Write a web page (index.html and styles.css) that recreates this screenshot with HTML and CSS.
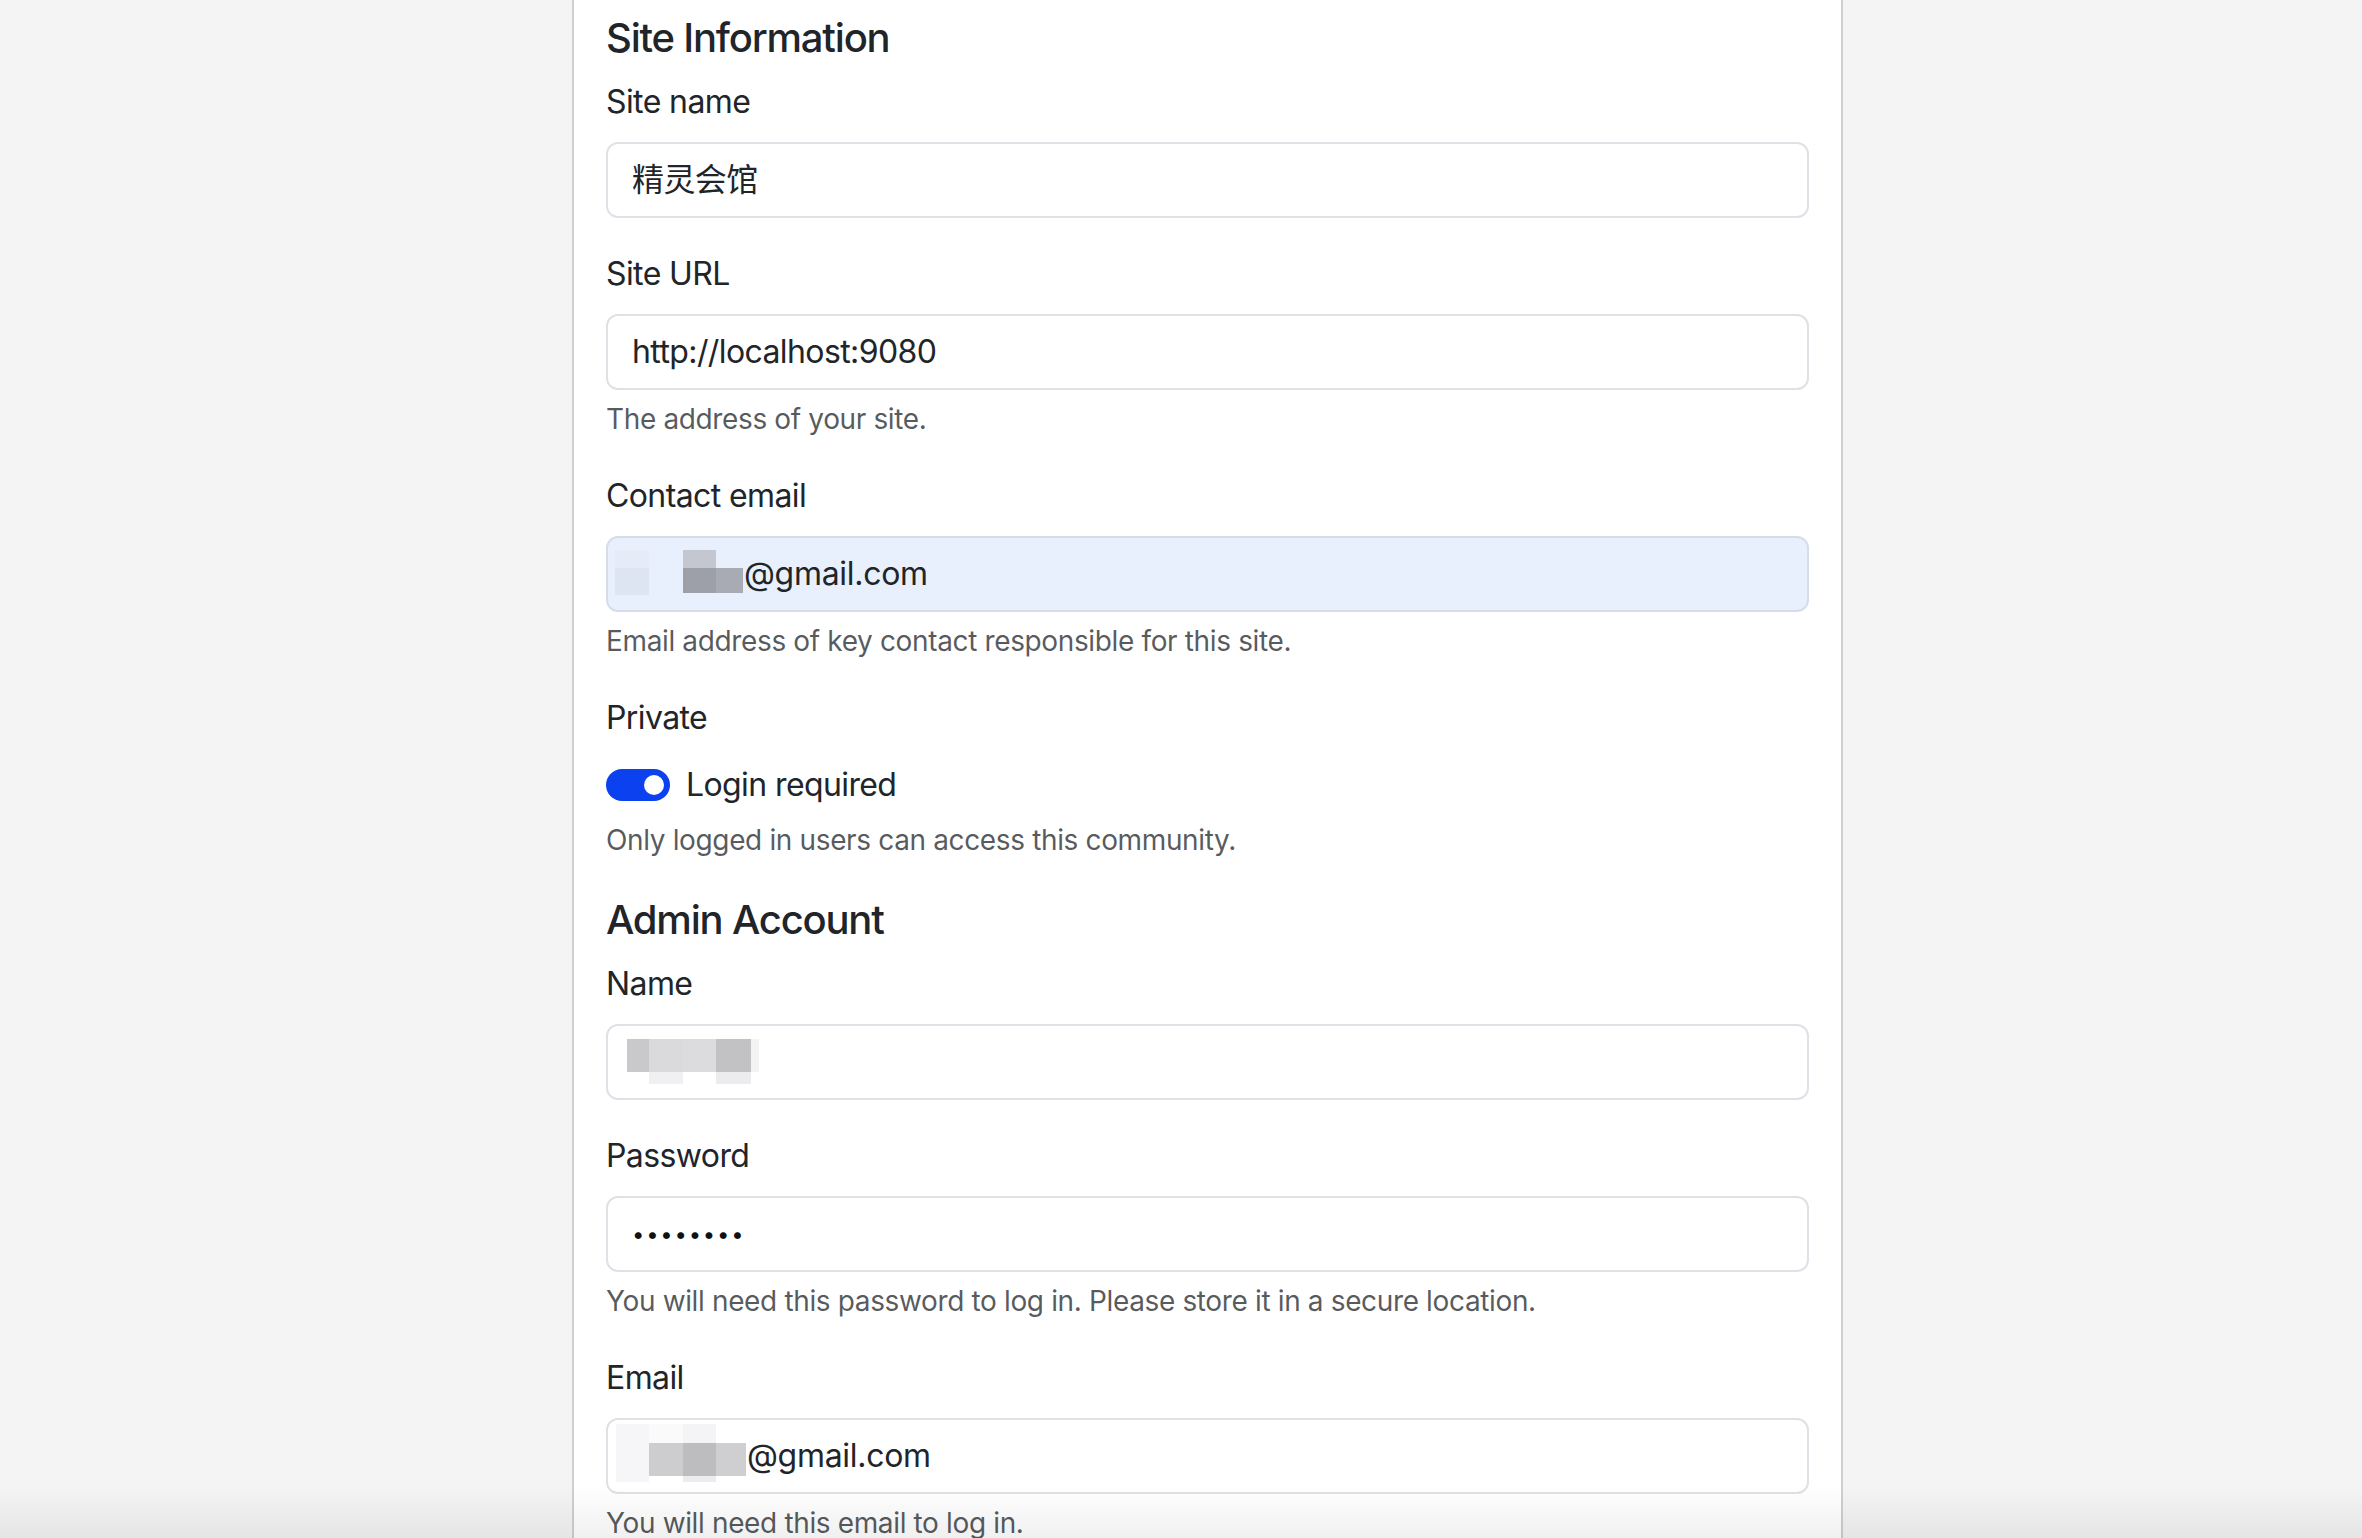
FILE: index.html
```html
<!DOCTYPE html>
<html>
  <head>
    <meta charset="UTF-8" />
    <title>Setup</title>
    <link rel="stylesheet" href="styles.css">
  </head>
  <body>
    <div class="page">
      <form class="card">
        <h5 class="title">Site Information</h5>

        <div class="group">
          <label class="label" for="siteName">Site name</label>
          <div class="field" id="siteName">精灵会馆</div>
        </div>

        <div class="group">
          <label class="label" for="siteUrl">Site URL</label>
          <div class="field" id="siteUrl">http://localhost:9080</div>
          <div class="hint">The address of your site.</div>
        </div>

        <div class="group">
          <label class="label" for="contactEmail">Contact email</label>
          <div class="field autofill" id="contactEmail">
            <span class="redact r-contact">
              <i class="px" style="left:0;top:0;width:34px;height:18px;background:#e6ecf7"></i>
              <i class="px" style="left:0;top:18px;width:34px;height:27px;background:#dde5f2"></i>
              <i class="px" style="left:68px;top:0;width:33px;height:18px;background:#c4c7d0"></i>
              <i class="px" style="left:68px;top:18px;width:33px;height:25px;background:#9da0a8"></i>
              <i class="px" style="left:101px;top:18px;width:27px;height:25px;background:#a8abb3"></i>
            </span>
            <span class="after r-contact-text">@gmail.com</span>
          </div>
          <div class="hint">Email address of key contact responsible for this site.</div>
        </div>

        <div class="group switch-group">
          <div class="label">Private</div>
          <div class="check">
            <span class="switch"><span class="knob"></span></span>
            <span class="check-label">Login required</span>
          </div>
          <div class="hint">Only logged in users can access this community.</div>
        </div>

        <h5 class="title">Admin Account</h5>

        <div class="group">
          <label class="label" for="adminName">Name</label>
          <div class="field" id="adminName">
            <span class="redact r-name">
              <i class="px" style="left:0;top:0;width:22px;height:33px;background:#c9c9cb"></i>
              <i class="px" style="left:22px;top:0;width:34px;height:33px;background:#dadadc"></i>
              <i class="px" style="left:56px;top:0;width:33px;height:33px;background:#dcdcde"></i>
              <i class="px" style="left:89px;top:0;width:35px;height:33px;background:#c2c2c4"></i>
              <i class="px" style="left:124px;top:0;width:8px;height:33px;background:#f3f3f4"></i>
              <i class="px" style="left:22px;top:33px;width:34px;height:12px;background:#f0f0f2"></i>
              <i class="px" style="left:89px;top:33px;width:35px;height:12px;background:#ececee"></i>
            </span>
          </div>
        </div>

        <div class="group">
          <label class="label" for="password">Password</label>
          <div class="field dots" id="password">••••••••</div>
          <div class="hint">You will need this password to log in. Please store it in a secure location.</div>
        </div>

        <div class="group">
          <label class="label" for="adminEmail">Email</label>
          <div class="field" id="adminEmail">
            <span class="redact r-email">
              <i class="px" style="left:0;top:0;width:33px;height:58px;background:#f6f6f8"></i>
              <i class="px" style="left:33px;top:0;width:34px;height:19px;background:#fafafa"></i>
              <i class="px" style="left:33px;top:19px;width:34px;height:33px;background:#cdcdcf"></i>
              <i class="px" style="left:67px;top:0;width:33px;height:19px;background:#f4f4f6"></i>
              <i class="px" style="left:67px;top:19px;width:33px;height:33px;background:#bdbdbf"></i>
              <i class="px" style="left:67px;top:52px;width:33px;height:6px;background:#ececee"></i>
              <i class="px" style="left:100px;top:19px;width:30px;height:33px;background:#cfcfd1"></i>
            </span>
            <span class="after r-email-text">@gmail.com</span>
          </div>
          <div class="hint">You will need this email to log in.</div>
        </div>
      </form>
    </div>
    <div class="fade"></div>
  </body>
</html>
```

FILE: styles.css
```css
body {
  margin: 0;
  background-color: #f4f4f4;
  font-family: Inter, "Noto Sans CJK SC", sans-serif;
  color: #212529;
}

.page {
  padding-left: 572px;
}

.card {
  width: 1271px;
  box-sizing: border-box;
  background-color: #fff;
  border-left: 2px solid #cfcfcf;
  border-right: 2px solid #cfcfcf;
  padding: 14px 32px 60px 32px;
  min-height: 1538px;
}

.title {
  font-size: 40px;
  font-weight: 500;
  line-height: 48px;
  margin: 0 0 16px 0;
  letter-spacing: -1.2px;
}

.group {
  margin-bottom: 32px;
}

.switch-group {
  margin-bottom: 35px;
}

.label {
  display: block;
  font-size: 32px;
  line-height: 48px;
  margin-bottom: 16px;
  letter-spacing: -0.6px;
}

.field {
  position: relative;
  display: flex;
  align-items: center;
  height: 76px;
  box-sizing: border-box;
  padding: 12px 24px;
  border: 2px solid #dee2e6;
  border-radius: 12px;
  font-size: 32px;
  line-height: 48px;
  letter-spacing: -0.6px;
}

.autofill {
  background-color: #e8f0fe;
  border-color: #d6dde8;
}

.dots {
  font-size: 22px;
  letter-spacing: 1.8px;
  color: #111;
}

.redact {
  position: absolute;
}

.px {
  position: absolute;
  display: block;
}

.r-contact {
  left: 7px;
  top: 12px;
}

.r-name {
  left: 19px;
  top: 13px;
}

.r-email {
  left: 8px;
  top: 4px;
}

.after {
  position: relative;
  letter-spacing: -0.3px;
}

.r-contact-text {
  margin-left: 112px;
}

.r-email-text {
  margin-left: 115px;
}

.hint {
  margin-top: 8px;
  font-size: 28px;
  line-height: 42px;
  color: rgba(33, 37, 41, 0.75);
  letter-spacing: -0.36px;
}

.check {
  display: flex;
  align-items: center;
  min-height: 48px;
  padding: 3px 0 2px 0;
  margin-bottom: 4px;
}

.switch {
  position: relative;
  width: 64px;
  height: 32px;
  border-radius: 16px;
  background-color: #0b41ef;
  margin-right: 16px;
}

.knob {
  position: absolute;
  right: 6px;
  top: 6px;
  width: 20px;
  height: 20px;
  border-radius: 50%;
  background-color: #fff;
}

.check-label {
  font-size: 32px;
  line-height: 48px;
  letter-spacing: -0.6px;
}

.fade {
  position: fixed;
  left: 0;
  right: 0;
  bottom: 0;
  height: 52px;
  background: linear-gradient(rgba(0, 0, 0, 0), rgba(0, 0, 0, 0.06));
  pointer-events: none;
}
```
